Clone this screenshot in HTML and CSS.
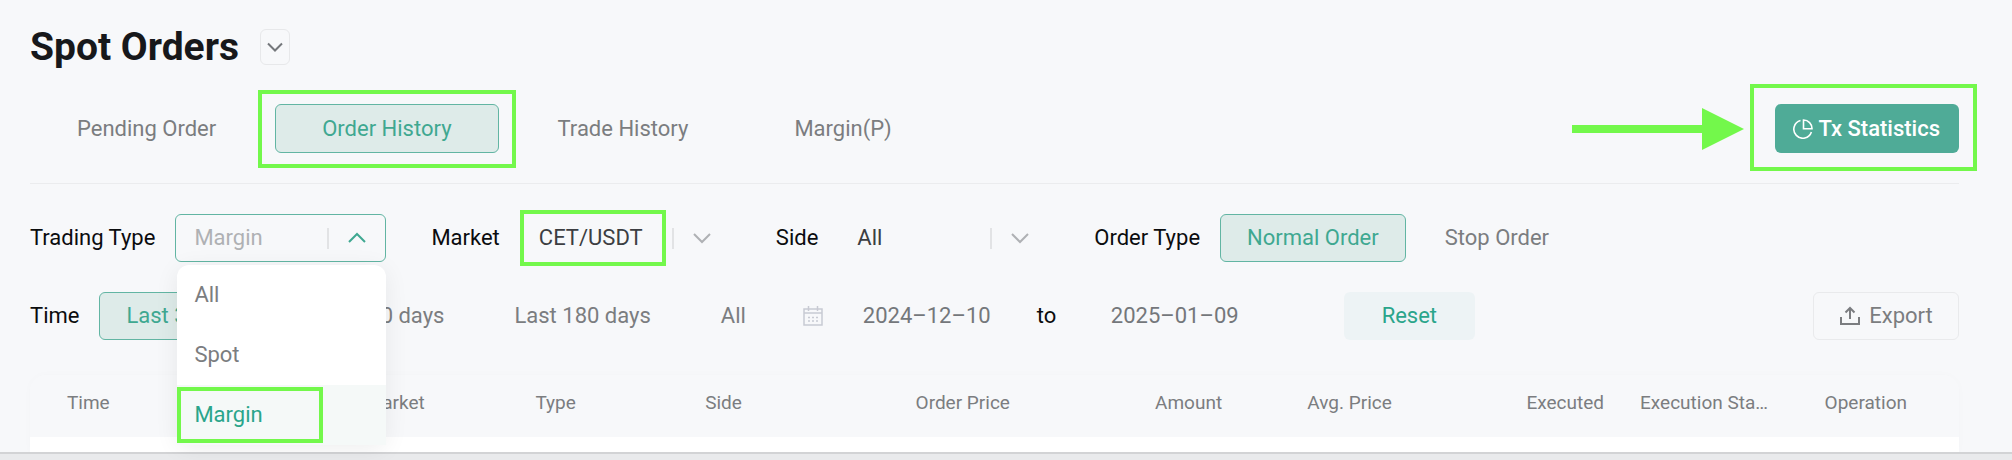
FILE: index.html
```html
<!DOCTYPE html>
<html lang="en">
<head>
<meta charset="utf-8">
<title>Spot Orders</title>
<link rel="stylesheet" href="styles.css">
</head>
<body>
<main class="page">
  <header class="heading">
    <h1 class="title">Spot Orders</h1>
    <button class="heading-toggle" type="button" aria-label="Switch order page">
      <svg width="16" height="10" viewBox="0 0 16 10"><path d="M1 1.500l7 7 7-7" /></svg>
    </button>
  </header>

  <div class="tab-bar">
    <nav class="tabs" aria-label="Order views">
      <button class="tab" type="button">Pending Order</button>
      <button class="tab active marked" type="button">Order History</button>
      <button class="tab" type="button">Trade History</button>
      <button class="tab" type="button">Margin(P)</button>
    </nav>
    <button class="stats marked" type="button">
      <svg class="pie" width="20" height="20" viewBox="0 0 20 20"><path d="M7.500 1.500A9 9 0 1 0 18.400 13M10.500 1v8.800h8.500A8.600 8.600 0 0 0 10.500 1z" /></svg>
      <span>Tx Statistics</span>
      <svg class="arrow" width="172" height="42" viewBox="0 0 172 42"><path d="M0 17h130V0l42 21-42 21V25H0z" /></svg>
    </button>
  </div>

  <form class="filters">
    <div class="filter-row">
      <div class="field">
        <label for="trading-type">Trading Type</label>
        <div class="select open">
          <select id="trading-type"><option>Margin</option><option>Spot</option><option>All</option></select>
          <span class="caret"><svg width="20" height="12" viewBox="0 0 20 12"><path d="M2 10l8-8 8 8" /></svg></span>
          <ul class="menu" role="listbox" aria-label="Trading Type">
            <li role="option">All</li>
            <li role="option">Spot</li>
            <li class="chosen" role="option" aria-selected="true">Margin</li>
          </ul>
        </div>
      </div>
      <div class="field">
        <label for="market">Market</label>
        <div class="select market">
          <select id="market"><option>CET/USDT</option></select>
          <span class="caret"><svg width="20" height="12" viewBox="0 0 20 12"><path d="M2 2l8 8 8-8" /></svg></span>
        </div>
      </div>
      <div class="field">
        <label for="side">Side</label>
        <div class="select">
          <select id="side"><option>All</option></select>
          <span class="caret"><svg width="20" height="12" viewBox="0 0 20 12"><path d="M2 2l8 8 8-8" /></svg></span>
        </div>
      </div>
      <div class="field" role="group" aria-labelledby="order-type">
        <span id="order-type">Order Type</span>
        <div class="choices">
          <button class="choice active" type="button">Normal Order</button>
          <button class="choice" type="button">Stop Order</button>
        </div>
      </div>
    </div>

    <div class="filter-row">
      <div class="field period" role="group" aria-labelledby="time">
        <span id="time">Time</span>
        <div class="choices spaced">
          <button class="choice active" type="button">Last 30 days</button>
          <button class="choice" type="button">Last 90 days</button>
          <button class="choice" type="button">Last 180 days</button>
          <button class="choice" type="button">All</button>
        </div>
      </div>
      <div class="range">
        <svg class="calendar" width="20" height="20" viewBox="0 0 20 20"><path d="M1 3h18v16H1zM1 7h18M5.500 0v5M14.500 0v5" /><path stroke-dasharray="2 2" d="M5 11.500h10M5 15h10" /></svg>
        <input class="date" aria-label="Start date" value="2024–12–10">
        <span class="to">to</span>
        <input class="date" aria-label="End date" value="2025–01–09">
      </div>
      <button class="reset" type="button">Reset</button>
      <button class="export" type="button">
        <svg width="22" height="20" viewBox="0 0 22 20"><path d="M2 11v7h18v-7M11 13V2M6.500 6.500L11 2l4.500 4.500" /></svg>
        Export
      </button>
    </div>
  </form>

  <section class="card">
    <table class="orders">
      <thead>
        <tr>
          <th class="col-time">Time</th>
          <th class="col-market">Market</th>
          <th class="col-type">Type</th>
          <th class="col-side">Side</th>
          <th class="col-price number">Order Price</th>
          <th class="col-amount number">Amount</th>
          <th class="col-avg number">Avg. Price</th>
          <th class="col-executed number">Executed</th>
          <th class="col-status number" title="Execution Status">Execution Sta…</th>
          <th class="col-operation number">Operation</th>
        </tr>
      </thead>
    </table>
  </section>
</main>
<footer class="bottom-bar"></footer>
</body>
</html>
```

FILE: styles.css
```css
* {
  box-sizing: border-box;
}

body {
  margin: 0;
  min-height: 100vh;
  display: flex;
  flex-direction: column;
  background: #f7f8fa;
  color: #0b0c0e;
  font-family: Roboto, "Liberation Sans", sans-serif;
  font-size: 22px;
  line-height: 28px;
}

button,
input,
select {
  font: inherit;
  color: inherit;
  margin: 0;
  padding: 0;
  border: 0;
  background: none;
}

svg {
  fill: none;
  stroke: currentColor;
  stroke-width: 2;
  flex: none;
}

.page {
  flex: 1;
  display: flex;
  flex-direction: column;
  padding: 29px 53px 0 30px;
}

.heading {
  display: flex;
  align-items: center;
  gap: 21px;
}

.title {
  margin: 0;
  font-size: 39px;
  line-height: 36px;
  font-weight: 700;
  color: #17181b;
}

.heading-toggle {
  display: grid;
  place-items: center;
  width: 30px;
  height: 36px;
  border: 1px solid #e7e8ea;
  border-radius: 6px;
  color: #74777b;
}

.tab-bar {
  display: flex;
  justify-content: space-between;
  margin-top: 39px;
  padding-bottom: 30px;
  border-bottom: 1px solid #ebecee;
}

.tabs {
  display: flex;
  gap: 12px;
}

.tab,
.choice {
  border: 1px solid transparent;
  border-radius: 6px;
  color: #7b7d80;
  white-space: nowrap;
}

.tab {
  height: 49px;
  padding: 0 46px;
}

.active {
  background: #deebe9;
  border-color: #62b5a3;
  color: #3fa891;
}

.marked,
.market {
  position: relative;
}

.marked::after,
.market::after,
.chosen::after {
  content: "";
  position: absolute;
  inset: -15px -18px -16px;
  border: 4px solid #73f84b;
  pointer-events: none;
}

.stats {
  display: flex;
  align-items: center;
  gap: 5px;
  height: 49px;
  padding: 0 19px 0 18px;
  border-radius: 6px;
  background: #4fab97;
  color: #fff;
  font-weight: 500;
}

.stats.marked::after {
  inset: -20px -18px -18px -25px;
}

.pie {
  stroke-width: 1.6;
}

.arrow {
  position: absolute;
  right: 215px;
  top: 4px;
  fill: #73f84b;
  stroke: none;
}

.filters {
  display: flex;
  flex-direction: column;
  gap: 30px;
  margin-top: 30px;
}

.filter-row {
  display: flex;
  align-items: center;
}

.field {
  display: flex;
  align-items: center;
  gap: 20px;
  margin-right: 45px;
  white-space: nowrap;
}

.period {
  margin-right: 30px;
}

.select {
  display: grid;
  align-items: center;
  position: relative;
  width: 211px;
  height: 48px;
  border: 1px solid transparent;
  border-radius: 6px;
  color: #3c3e42;
}

.select select {
  grid-area: 1 / 1;
  appearance: none;
  width: 100%;
  height: 100%;
  padding: 0 60px 0 18px;
}

.caret {
  grid-area: 1 / 1;
  justify-self: end;
  display: grid;
  place-items: center;
  width: 58px;
  height: 21px;
  border-left: 2px solid #e2e3e5;
  color: #afb1b4;
  pointer-events: none;
}

.select.open {
  border-color: #62b5a3;
  color: #afb1b4;
}

.open .caret {
  color: #3fa891;
}

.market::after {
  inset: -5px 64px -5px -1px;
}

.menu {
  position: absolute;
  z-index: 1;
  top: 50px;
  left: 1px;
  right: -1px;
  margin: 0;
  padding: 0;
  list-style: none;
  border-radius: 12px;
  background: #fff;
  color: #7b7d80;
  box-shadow: 0 4px 24px rgba(0, 0, 0, 0.07);
}

.menu li {
  position: relative;
  padding: 16px 17px;
}

.menu .chosen {
  background: #f5f9f8;
  color: #2aa58b;
}

.menu .chosen::after {
  inset: 2px 63px 2px 0;
}

.choices {
  display: flex;
  gap: 12px;
}

.choices.spaced {
  gap: 16px;
}

.choice {
  height: 48px;
  padding: 0 26px;
}

.range {
  display: flex;
  align-items: center;
}

.calendar {
  color: #c8cad3;
  stroke-width: 1.5;
}

.date {
  width: 214px;
  padding-left: 40px;
  color: #74777b;
}

.to {
  width: 34px;
}

.reset {
  width: 131px;
  height: 48px;
  margin-left: 59px;
  border-radius: 6px;
  background: #edf3f5;
  color: #2aa58b;
}

.export {
  display: flex;
  align-items: center;
  justify-content: center;
  gap: 8px;
  width: 146px;
  height: 48px;
  margin-left: auto;
  border: 1px solid #e9eaec;
  border-radius: 6px;
  color: #7b7d80;
}

.card {
  flex: 1;
  margin-top: 35px;
  border-radius: 16px 16px 0 0;
  background: linear-gradient(#f7f8fa 62px, #fff 62px);
  box-shadow: 0 0 8px rgba(0, 0, 0, 0.02);
}

.orders {
  width: 100%;
  table-layout: fixed;
  border-collapse: collapse;
  font-size: 19px;
  line-height: 24px;
  color: #7b7d80;
}

.orders th {
  height: 62px;
  padding: 0 0 6px;
  font-weight: 400;
  text-align: left;
  white-space: nowrap;
}

.orders .number {
  text-align: right;
}

.orders .col-time {
  width: 17.4%;
  padding-left: 37px;
}

.col-market,
.col-type,
.col-avg {
  width: 8.8%;
}

.col-side {
  width: 6.7%;
}

.col-price {
  width: 9.1%;
}

.col-amount,
.col-executed {
  width: 11%;
}

.col-status {
  width: 8.5%;
}

.orders .col-operation {
  padding-right: 52px;
}

.bottom-bar {
  position: relative;
  height: 8px;
  border-top: 2px solid #d2d3d5;
  background: #e9eaec;
}
```
